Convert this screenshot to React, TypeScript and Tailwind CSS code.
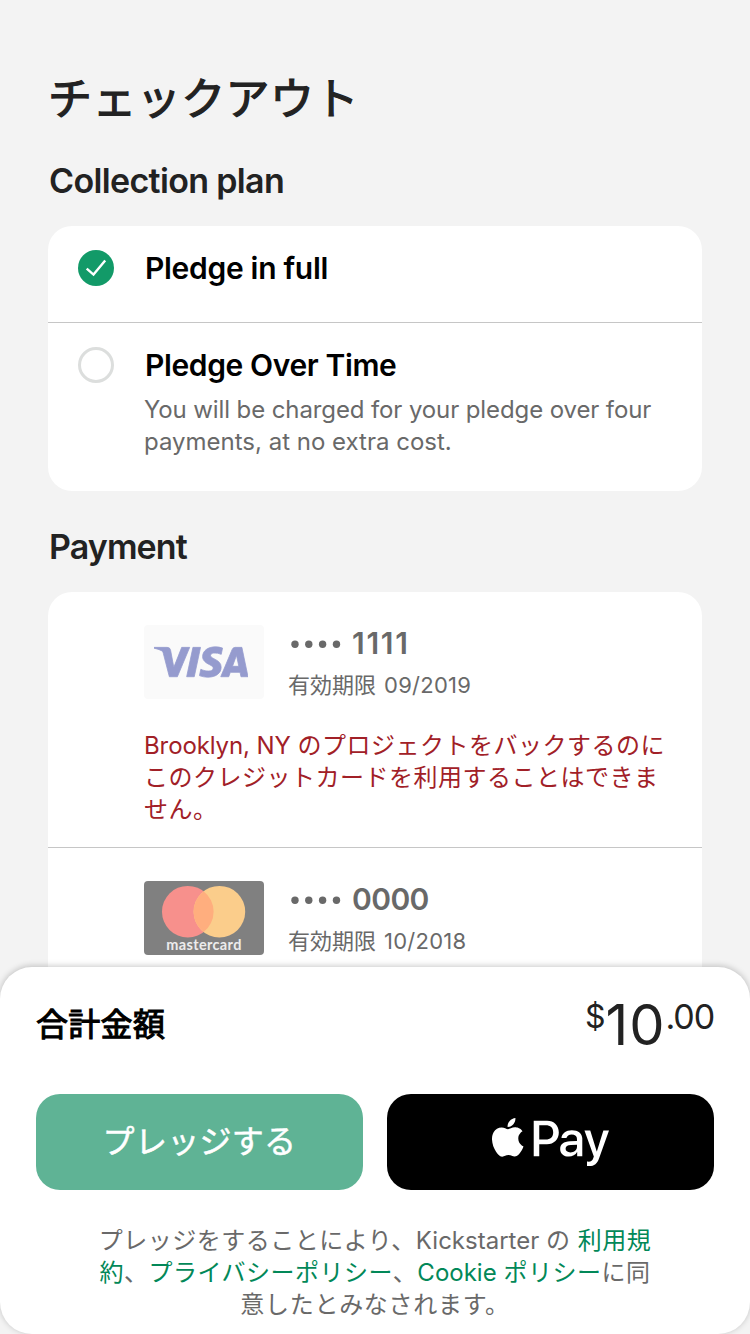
import type { ReactNode } from "react";
import { FaApplePay } from "react-icons/fa";
import { SiVisa } from "react-icons/si";

function SectionTitle({ children }: { children: ReactNode }) {
  return (
    <h2 className="pl-px text-[34px] leading-[42px] font-semibold tracking-[-0.65px] whitespace-nowrap text-[#222222]">
      {children}
    </h2>
  );
}

function VisaCard() {
  return (
    <div className="flex h-[74px] w-[120px] items-center rounded bg-[#fafafa] pl-[10px]">
      <SiVisa className="size-[94px] stroke-[#959bce] stroke-[0.2] text-[#959bce]" />
    </div>
  );
}

function MastercardCard() {
  return (
    <div className="flex h-[74px] w-[120px] flex-col items-center overflow-hidden rounded bg-[#808080]">
      <svg className="block h-[57px] w-[120px] shrink-0" viewBox="0 0 120 57">
        <circle cx="43.8" cy="30.7" r="25.8" fill="#f7908c" />
        <circle cx="75.4" cy="30.7" r="25.8" fill="#fbcd8b" />
        <path d="M59.6 10.3a25.8 25.8 0 0 1 0 40.8a25.8 25.8 0 0 1 0-40.8z" fill="#ffae7e" />
      </svg>
      <span className="font-[Lato,sans-serif] text-[14.5px] leading-[14px] font-bold tracking-[0.35px] text-[#ececec]">
        mastercard
      </span>
    </div>
  );
}

function CardDetails({ logo, digits, expiry }: { logo: ReactNode; digits: ReactNode; expiry: string }) {
  return (
    <div className="flex gap-6">
      {logo}
      <div className="flex flex-col whitespace-nowrap text-[#696969]">
        <div className="flex h-9 items-center">
          <svg className="h-9 w-16" viewBox="0 0 64 36">
            <g fill="#696969">
              <circle cx="7" cy="19.3" r="3.7" />
              <circle cx="20.8" cy="19.3" r="3.7" />
              <circle cx="34.6" cy="19.3" r="3.7" />
              <circle cx="48.5" cy="19.3" r="3.7" />
            </g>
          </svg>
          <span className="text-[30px] leading-9 font-semibold">{digits}</span>
        </div>
        <span className="mt-2 text-[22px] leading-8">
          有効期限<span className="ml-[8px] tracking-[0.25px]">{expiry}</span>
        </span>
      </div>
    </div>
  );
}

export default function App() {
  return (
    <main
      lang="ja"
      className="flex h-[1334px] w-[750px] flex-col overflow-hidden bg-[#f3f3f3] font-[Inter,'Noto_Sans_CJK_JP',sans-serif]"
    >
      <section className="flex h-[967px] shrink-0 flex-col overflow-hidden px-12 pt-[69px]">
        <h1 className="text-[44px] leading-[60px] tracking-[0.4px] whitespace-nowrap text-[#222222] [-webkit-text-stroke:1.2px_#222222]">
          チェックアウト
        </h1>
        <div className="mt-[31px]">
          <SectionTitle>Collection plan</SectionTitle>
        </div>
        <div className="mt-6 h-[265px] shrink-0 rounded-3xl bg-white">
          <div className="flex h-[97px] gap-[30px] border-b border-[#c6c6c6] pt-6 pl-[30px]">
            <svg className="size-9" viewBox="0 0 36 36">
              <circle cx="18" cy="18" r="18" fill="#129a68" />
              <path d="M8.7 18.6l6.8 6L27.2 10.6" fill="none" stroke="white" strokeWidth="2.4" />
            </svg>
            <span className="pl-px text-[30px] leading-9 font-semibold tracking-[-0.3px] text-black">
              Pledge in full
            </span>
          </div>
          <div className="flex gap-[30px] pt-6 pl-[30px]">
            <span className="size-9 rounded-full border-[3.5px] border-[#dcdedd]" />
            <div className="flex flex-col whitespace-nowrap">
              <span className="pl-px text-[30px] leading-9 font-semibold tracking-[-0.38px] text-black">
                Pledge Over Time
              </span>
              <p className="mt-[11px] text-[24px] leading-8 text-[#696969]">
                <span className="tracking-[-0.11px]">You will be charged for your pledge over four</span>
                <br />
                payments, at no extra cost.
              </p>
            </div>
          </div>
        </div>
        <div className="mt-[35px]">
          <SectionTitle>
            <span className="tracking-[-0.9px]">Payment</span>
          </SectionTitle>
        </div>
        <div className="mt-6 flex h-[400px] shrink-0 flex-col rounded-t-3xl bg-white">
          <div className="h-[256px] border-b border-[#c6c6c6] pt-[33px] pl-24">
            <CardDetails
              logo={<VisaCard />}
              digits={<span className="tracking-[1.7px]">1111</span>}
              expiry="09/2019"
            />
            <p className="mt-[29px] text-[24px] leading-8 tracking-[0.5px] whitespace-nowrap text-[#a12027]">
              <span className="tracking-[-0.1px]">Brooklyn, NY </span>のプロジェクトをバックするのに
              <br />
              このクレジットカードを利用することはできま
              <br />
              せん。
            </p>
          </div>
          <div className="pt-[33px] pl-24">
            <CardDetails
              logo={<MastercardCard />}
              digits={<span className="tracking-[-0.6px]">0000</span>}
              expiry="10/2018"
            />
          </div>
        </div>
      </section>

      <section className="relative flex h-[367px] shrink-0 flex-col rounded-[32px] bg-white px-9 shadow-[0_-1px_6px_rgba(0,0,0,0.22)]">
        <div className="flex h-[127px] justify-between pt-[33px]">
          <span className="pt-px text-[32px] leading-[48px] tracking-[0.3px] text-black [-webkit-text-stroke:1.1px_black]">
            合計金額
          </span>
          <div className="flex leading-none text-[#222222]">
            <span className="mt-px text-[32px]">$</span>
            <span className="-mt-[3px] text-[56px] tracking-[0.9px]">10</span>
            <span className="text-[34px] tracking-[-1.1px]">.00</span>
          </div>
        </div>
        <div className="flex gap-6">
          <button className="flex h-24 flex-1 items-center justify-center rounded-3xl bg-[#5fb395] text-[32px] tracking-[0.3px] text-white [-webkit-text-stroke:0.5px_white]">
            プレッジする
          </button>
          <button className="flex h-24 flex-1 items-center justify-center rounded-3xl bg-black" aria-label="Apple Pay">
            <FaApplePay className="h-[94px] w-[117px] text-white" />
          </button>
        </div>
        <p className="mt-[35px] text-center text-[24px] leading-8 tracking-[0.5px] whitespace-nowrap text-[#696969]">
          プレッジをすることにより、<span className="tracking-[0px]">Kickstarter </span>の{" "}
          <a className="text-[#028858]">利用規</a>
          <br />
          <a className="text-[#028858]">約</a>、<a className="text-[#028858]">プライバシーポリシー</a>、
          <a className="text-[#028858]">
            <span className="tracking-[0px]">Cookie </span>ポリシー
          </a>
          に同
          <br />
          <span className="tracking-[0.7px]">意したとみなされます。</span>
        </p>
      </section>
    </main>
  );
}
